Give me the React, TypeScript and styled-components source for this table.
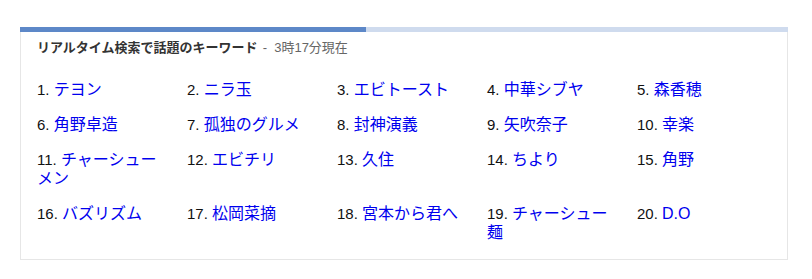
import React from 'react';
import styled, {createGlobalStyle} from 'styled-components';

const GlobalStyle = createGlobalStyle`
  body {
    margin: 0;
    background: #fff;
    font-family: "Liberation Sans", Arial, "Noto Sans CJK JP", sans-serif;
  }
`

const Page = styled.div`
  padding: 27px 20px 19px;
`

const Box = styled.section`
  width: 768px;
  box-sizing: border-box;
  border: 1px solid #e6e6e6;
  border-top: none;
  background: #fff;
`

const Bar = styled.div<{ $done: number }>`
  height: 5px;
  margin: 0 -1px;
  background: linear-gradient(to right, #5d88c8 ${p => p.$done}%, #cfdbee ${p => p.$done}%);
`

const Title = styled.h2`
  margin: 0;
  padding: 8px 16px 0;
  font-size: 13px;
  line-height: 16px;
  font-weight: bold;
  color: #333;
  > .time{
    font-weight: normal;
    color: #666;
    margin-left: 5px;
  }
`

const List = styled.ol`
  list-style: none;
  margin: 0;
  padding: 24px 16px 17px;
  display: grid;
  grid-template-columns: repeat(5, 150px);
  row-gap: 16px;
`

const Item = styled.li`
  box-sizing: border-box;
  padding-right: 22px;
  font-size: 15px;
  line-height: 19px;
  color: #111;
  > a{
    font-size: 16px;
    color: #0000ee;
    text-decoration: none;
  }
`

const words = [
  'テヨン', 'ニラ玉', 'エビトースト', '中華シブヤ', '森香穂',
  '角野卓造', '孤独のグルメ', '封神演義', '矢吹奈子', '幸楽',
  'チャーシューメン', 'エビチリ', '久住', 'ちより', '角野',
  'バズリズム', '松岡菜摘', '宮本から君へ', 'チャーシュー麺', 'D.O',
]

function App() {
  return (
    <Page>
      <GlobalStyle/>
      <Box>
        <Bar $done={45}/>
        <Title>
          リアルタイム検索で話題のキーワード
          <span className="time">- &nbsp;3時17分現在</span>
        </Title>
        <List>
          {words.map((w, i) => (
            <Item key={w}>
              {i + 1}. <a href="#">{w}</a>
            </Item>
          ))}
        </List>
      </Box>
    </Page>
  );
}

export default App
